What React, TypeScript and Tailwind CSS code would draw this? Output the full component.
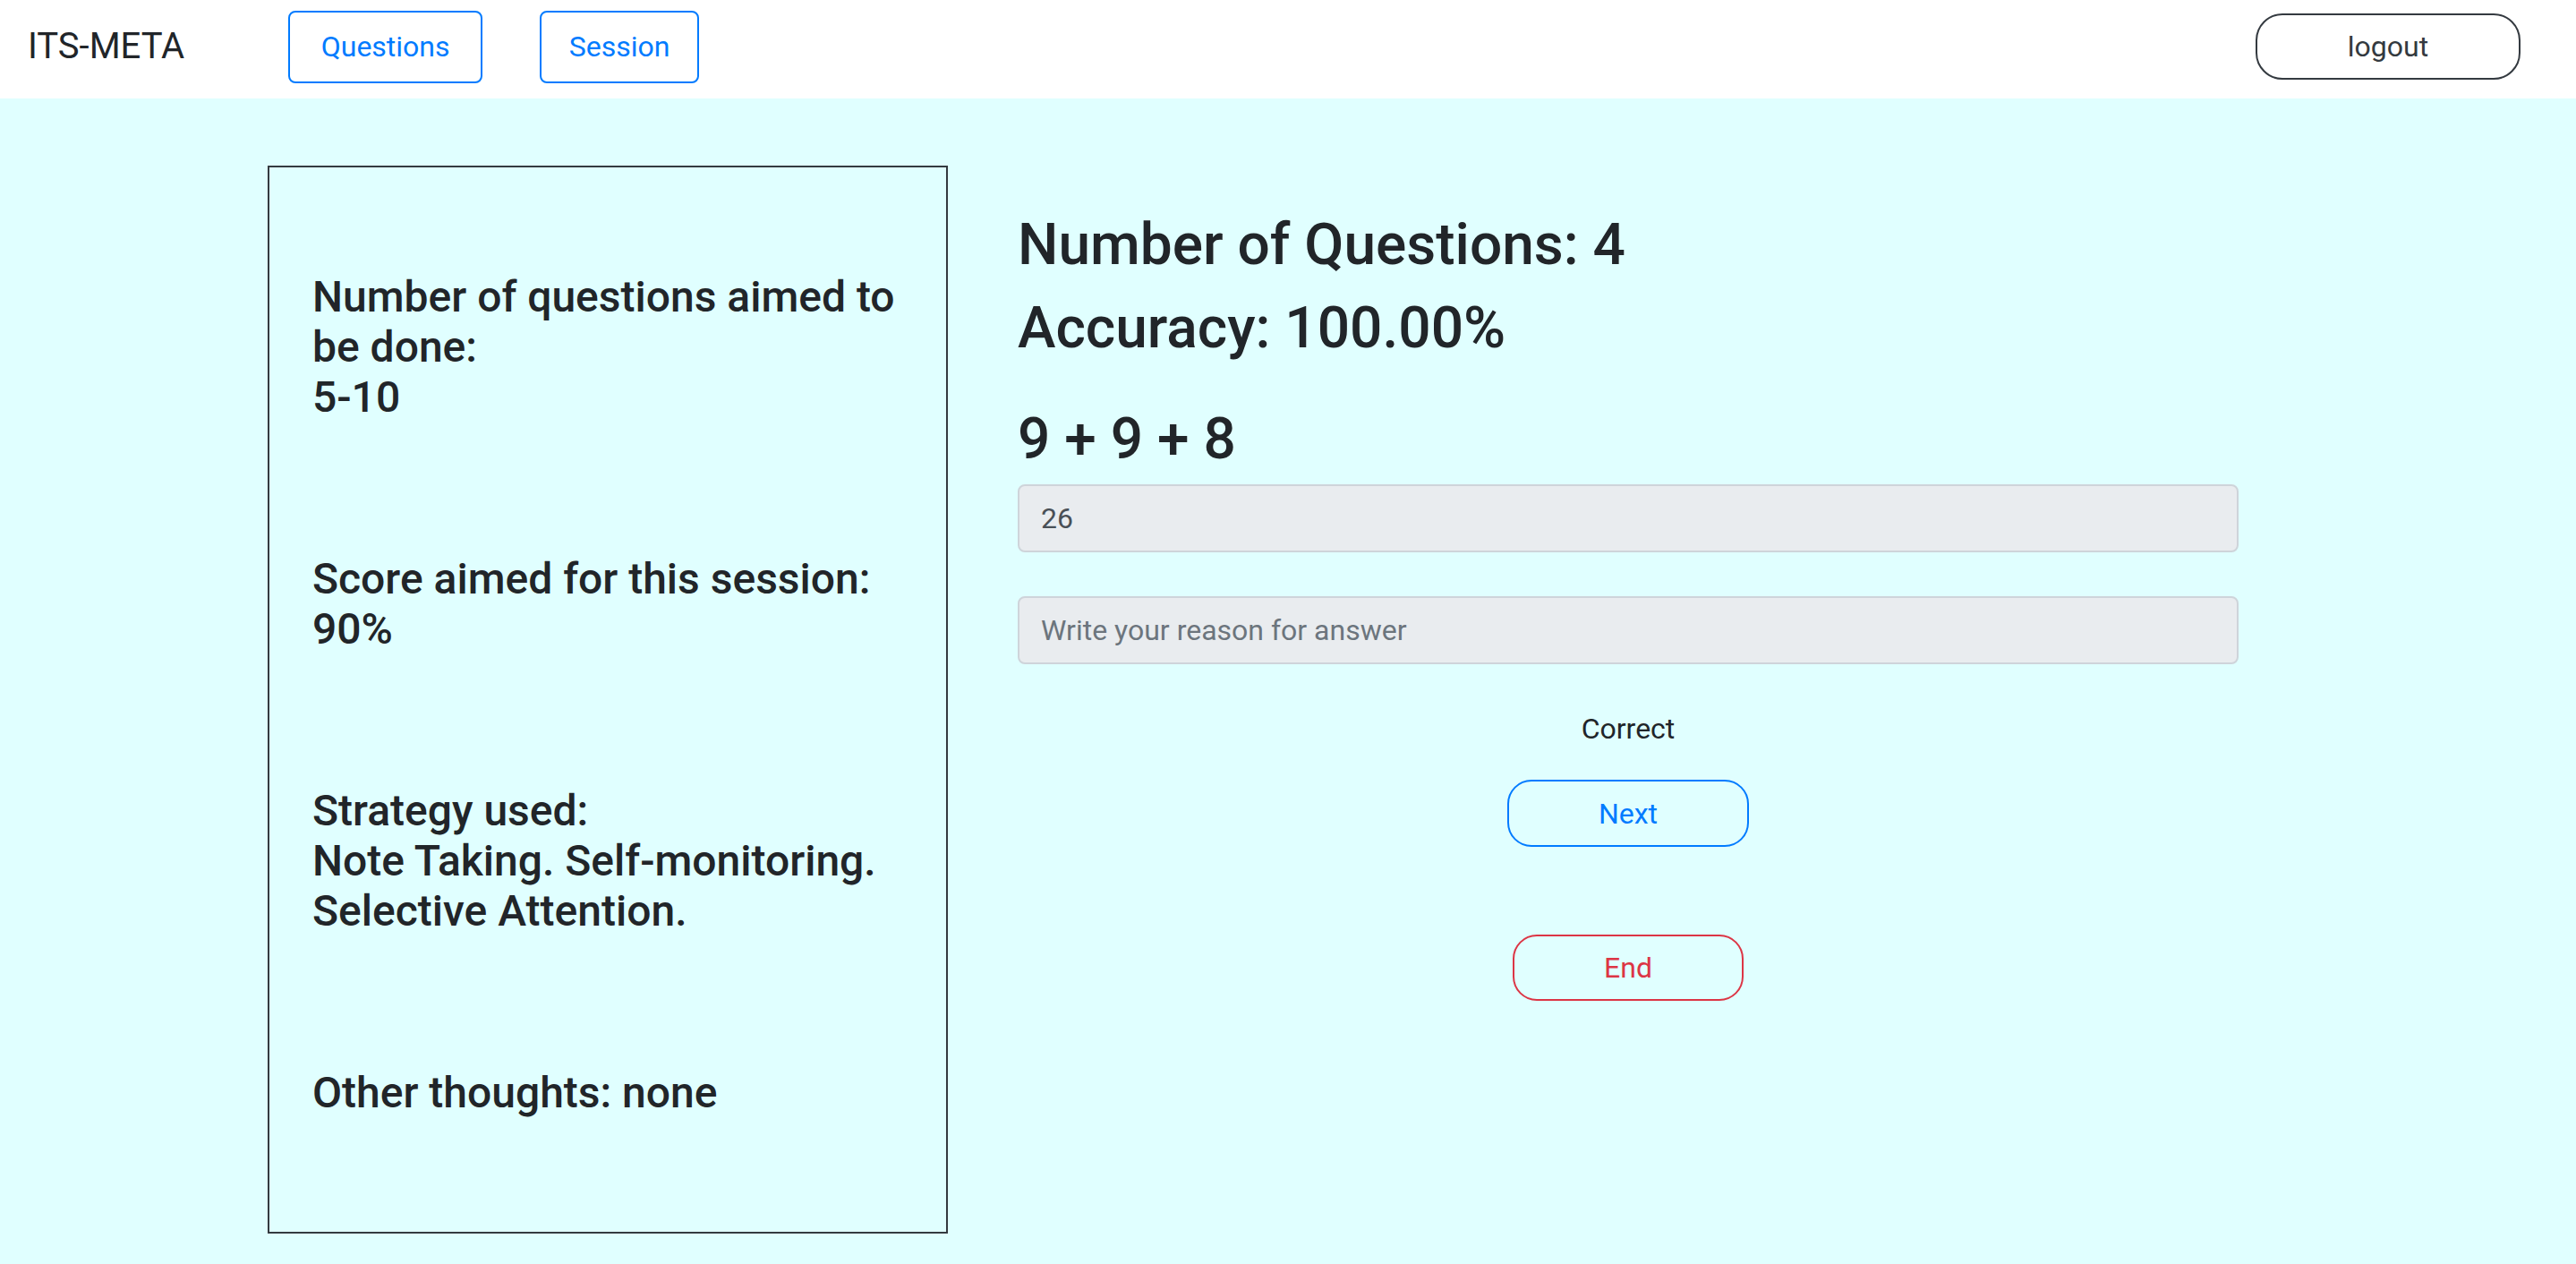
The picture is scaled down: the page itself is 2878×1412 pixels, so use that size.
import React from 'react';

// Session practice page: goal summary on the left, question card on the right

const goals = [
  ['Number of questions aimed to', 'be done:', '5-10'],
  ['Score aimed for this session:', '90%'],
  ['Strategy used:', 'Note Taking. Self-monitoring.', 'Selective Attention.'],
  ['Other thoughts: none'],
];

function Header() {
  return (
    <div className="flex h-[110px] items-center bg-white pb-[6px] pl-[31px] pr-[62px]">
      <div className="text-[40px] leading-[48px] text-[#212529]">ITS-META</div>
      <button className="ml-[116px] h-[81px] w-[217px] rounded-[8px] border-2 border-[#007bff] text-[32px] text-[#007bff]">
        Questions
      </button>
      <button className="ml-[64px] h-[81px] w-[178px] rounded-[8px] border-2 border-[#007bff] text-[32px] text-[#007bff]">
        Session
      </button>
      <button className="ml-auto h-[74px] w-[296px] rounded-[30px] border-2 border-[#343a40] text-[32px] text-[#343a40]">
        logout
      </button>
    </div>
  );
}

export default function App() {
  return (
    <div
      className="min-h-screen bg-[#e0ffff]"
      style={{ fontFamily: 'Roboto, "Noto Sans", sans-serif' }}
    >
      <Header />

      <div className="mx-auto flex w-[2280px] items-start pt-[75px]">
        {/* Goals */}
        <div className="flex w-[760px] flex-col gap-[147px] border-2 border-[#343a40] pb-[127px] pl-[48px] pt-[117px]">
          {goals.map((lines, i) => (
            <div key={i} className="text-[48px] font-medium leading-[56px] text-[#212529]">
              {lines.map((l) => (
                <div key={l}>{l}</div>
              ))}
            </div>
          ))}
        </div>

        {/* Question */}
        <div className="flex flex-1 flex-col px-[78px] pt-[50px]">
          <h2 className="mb-[16px] text-[64px] font-medium leading-[77px] text-[#212529]">
            Number of Questions: 4
          </h2>
          <h2 className="mb-[16px] text-[64px] font-medium leading-[77px] text-[#212529]">
            Accuracy: 100.00%
          </h2>
          <h2 className="mb-[12px] mt-[31px] text-[64px] font-medium leading-[77px] text-[#212529]">
            9 + 9 + 8
          </h2>

          <input
            disabled
            value="26"
            readOnly
            className="h-[76px] w-full rounded-[8px] border-2 border-[#ced4da] bg-[#e9ecef] px-[24px] text-[32px] text-[#495057]"
          />
          <input
            disabled
            placeholder="Write your reason for answer"
            className="mt-[49px] h-[76px] w-full rounded-[8px] border-2 border-[#ced4da] bg-[#e9ecef] px-[24px] text-[32px] text-[#495057] placeholder:text-[#6c757d]"
          />

          <div className="mt-[48px] text-center text-[32px] leading-[48px] text-[#212529]">Correct</div>

          <div className="mt-[33px] flex justify-center">
            <button className="h-[75px] w-[270px] rounded-[27px] border-2 border-[#007bff] text-[32px] text-[#007bff]">
              Next
            </button>
          </div>
          <div className="mt-[98px] flex justify-center">
            <button className="h-[74px] w-[258px] rounded-[27px] border-2 border-[#dc3545] text-[32px] text-[#dc3545]">
              End
            </button>
          </div>
        </div>
      </div>
    </div>
  );
}
